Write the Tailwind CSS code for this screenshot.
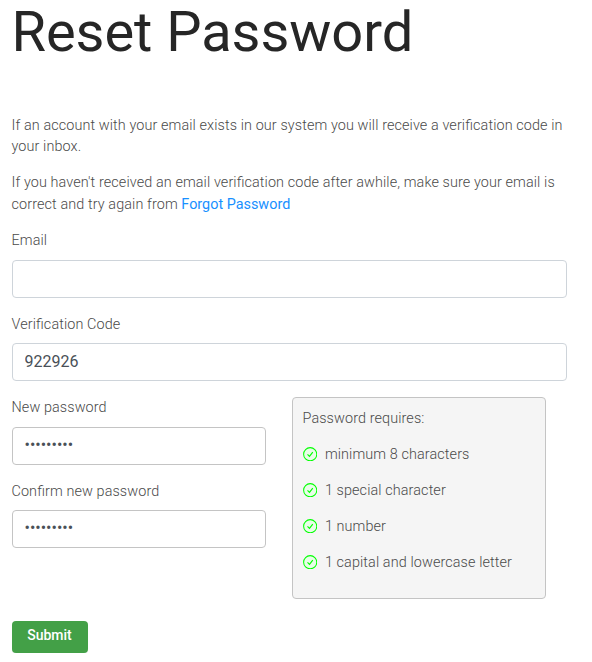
<!doctype html>
<html lang="en">

<head>
    <meta charset="UTF-8">
    <meta name="viewport" content="width=device-width, initial-scale=1.0">
    <script src="https://cdn.jsdelivr.net/npm/@tailwindcss/browser@4"></script>
    <title>Reset Password</title>
</head>

<body class="bg-white overflow-hidden font-[Roboto,sans-serif] font-light text-[14.4px] leading-[21.6px] tracking-[0.105px] [font-feature-settings:'liga'_1] text-[#4a4a4a]">
    <div class="pl-[11.5px] w-[566.5px]">
        <h1 class="h-[114.6px] text-[56px] leading-[64px] font-normal tracking-[-0.05px] text-[#262626]">Reset Password</h1>

        <p class="mb-[14.4px]">If an account with your email exists in our system you will receive a verification code in your inbox.</p>
        <p class="mb-[14.6px]">If you haven't received an email verification code after awhile, make sure your email is correct and try again from <a href="#" class="font-normal tracking-normal text-[#1890ff]">Forgot Password</a></p>

        <form>
            <!-- Email -->
            <div class="mb-4">
                <label for="email" class="block mb-2">Email</label>
                <input id="email" type="text" class="block w-full h-[38px] px-3 border border-[#ced4da] rounded text-base font-normal tracking-normal text-[#495057]">
            </div>

            <!-- Verification code -->
            <div class="mb-4">
                <label for="code" class="block mb-2">Verification Code</label>
                <input id="code" type="text" value="922926" class="block w-full h-[38px] px-3 pb-0.5 border border-[#ced4da] rounded text-base font-normal tracking-normal text-[#495057]">
            </div>

            <div class="flex gap-[26px] mb-[22px]">
                <!-- Passwords -->
                <div class="w-[254px]">
                    <div class="mb-4">
                        <label for="password" class="block mb-2">New password</label>
                        <input id="password" type="password" value="password1" class="block w-full h-[38px] px-3 pb-0.5 border border-[#c4c4c4] rounded text-base font-normal tracking-normal text-[#495057]">
                    </div>
                    <div>
                        <label for="confirm" class="block mb-[7.5px]">Confirm new password</label>
                        <input id="confirm" type="password" value="password1" class="block w-full h-[38px] px-3 pb-0.5 border border-[#c4c4c4] rounded text-base font-normal tracking-normal text-[#495057]">
                    </div>
                </div>

                <!-- Password rules -->
                <div class="w-[254px] h-[202px] px-[10px] pt-[10px] border border-[#c4c4c4] rounded bg-[#f5f5f5]">
                    <p class="mb-[14.4px]">Password requires:</p>
                    <ul class="space-y-[14.4px]">
                        <li class="flex items-center gap-2">
                            <svg class="size-[14.4px] mb-[2px]" viewBox="0 0 14 14" fill="none" stroke="#0f0"><circle cx="7" cy="7" r="6.4" fill="#e9fde9" /><path d="M4.4 7.2l1.9 1.9 3.2-4.2" stroke-width="1.1" /></svg>
                            <span>minimum 8 characters</span>
                        </li>
                        <li class="flex items-center gap-2">
                            <svg class="size-[14.4px] mb-[2px]" viewBox="0 0 14 14" fill="none" stroke="#0f0"><circle cx="7" cy="7" r="6.4" fill="#e9fde9" /><path d="M4.4 7.2l1.9 1.9 3.2-4.2" stroke-width="1.1" /></svg>
                            <span>1 special character</span>
                        </li>
                        <li class="flex items-center gap-2">
                            <svg class="size-[14.4px] mb-[2px]" viewBox="0 0 14 14" fill="none" stroke="#0f0"><circle cx="7" cy="7" r="6.4" fill="#e9fde9" /><path d="M4.4 7.2l1.9 1.9 3.2-4.2" stroke-width="1.1" /></svg>
                            <span>1 number</span>
                        </li>
                        <li class="flex items-center gap-2">
                            <svg class="size-[14.4px] mb-[2px]" viewBox="0 0 14 14" fill="none" stroke="#0f0"><circle cx="7" cy="7" r="6.4" fill="#e9fde9" /><path d="M4.4 7.2l1.9 1.9 3.2-4.2" stroke-width="1.1" /></svg>
                            <span>1 capital and lowercase letter</span>
                        </li>
                    </ul>
                </div>
            </div>

            <button type="button" class="block w-[76px] h-8 pb-[3px] rounded bg-[#43a047] text-[14px] font-medium tracking-normal text-white shadow-[0_1px_1px_rgba(0,0,0,0.06)]">Submit</button>
        </form>
    </div>
</body>

</html>
